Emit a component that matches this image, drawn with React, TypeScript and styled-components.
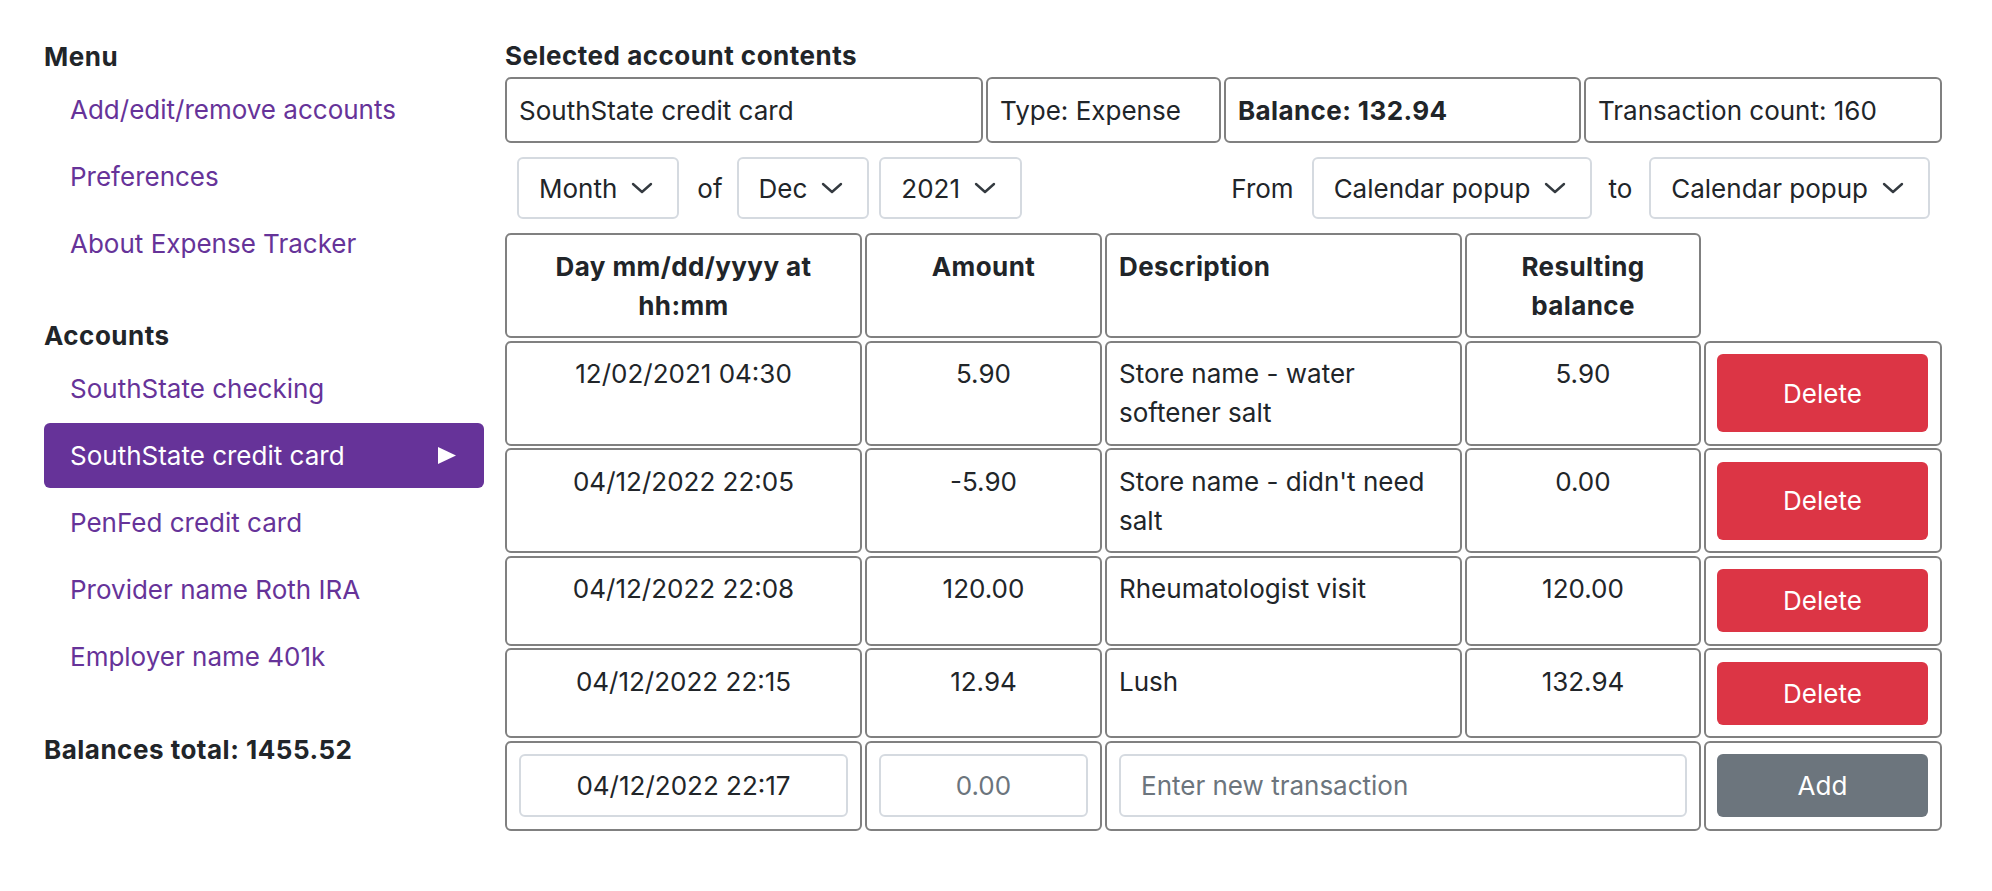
import React from "react";
import styled, { createGlobalStyle, css } from "styled-components";

const GlobalStyle = createGlobalStyle`
  html, body {
    margin: 0;
    padding: 0;
    background: #ffffff;
  }
  body {
    font-family: Inter, "Noto Sans", "Liberation Sans", sans-serif;
    font-size: 26px;
    line-height: 39px;
    color: #212529;
  }
  * { box-sizing: border-box; }
`;

const PURPLE = "#663399";
const CELL_BORDER = "#808080";
const INPUT_BORDER = "#d5dae0";
const BOLD_SPACING = "0.5px";

const Page = styled.div`
  display: flex;
  align-items: flex-start;
  padding: 36px 0 0 44px;
`;

const Sidebar = styled.aside`
  width: 440px;
  display: flex;
  flex-direction: column;
  padding-top: 1px;
`;

const SectionTitle = styled.div<{ $gap?: number }>`
  font-weight: 700;
  letter-spacing: ${BOLD_SPACING};
  line-height: 39px;
  margin-top: ${(p) => p.$gap ?? 0}px;
`;

const NavList = styled.nav`
  display: flex;
  flex-direction: column;
  gap: 2px;
  padding-top: 1px;
`;

const NavLink = styled.a<{ $active?: boolean }>`
  display: flex;
  align-items: center;
  justify-content: space-between;
  height: 65px;
  padding: 0 28px 0 26px;
  border-radius: 6px;
  color: ${PURPLE};
  text-decoration: none;
  cursor: pointer;
  ${(p) =>
    p.$active &&
    css`
      background: ${PURPLE};
      color: #ffffff;
    `}
`;

const Main = styled.main`
  width: 1438px;
  margin-left: 21px;
  display: flex;
  flex-direction: column;
`;

const MainTitle = styled.div`
  font-weight: 700;
  letter-spacing: ${BOLD_SPACING};
  line-height: 39px;
  margin-bottom: 2px;
`;

const InfoRow = styled.div`
  display: grid;
  grid-template-columns: 478px 235px 357px 358px;
  column-gap: 3px;
`;

const Cell = styled.div<{ $align?: "left" | "center"; $bold?: boolean }>`
  border: 2px solid ${CELL_BORDER};
  border-radius: 6px;
  padding: 11.5px 12px;
  line-height: 39px;
  text-align: ${(p) => p.$align ?? "left"};
  font-weight: ${(p) => (p.$bold ? 700 : 400)};
  letter-spacing: ${(p) => (p.$bold ? "0.4px" : "normal")};
`;

const ActionCell = styled(Cell)`
  display: flex;
  flex-direction: column;
  padding: 11.5px 12px 11.5px 11px;
`;

const FilterRow = styled.div`
  display: flex;
  justify-content: space-between;
  align-items: center;
  margin-top: 14px;
  padding: 0 13px 0 12px;
`;

const FilterGroup = styled.div`
  display: flex;
  align-items: center;
`;

const FilterLabel = styled.span<{ $l: number; $r: number }>`
  margin: 0 ${(p) => p.$r}px 0 ${(p) => p.$l}px;
`;

const SelectBox = styled.div<{ $ml?: number }>`
  display: inline-flex;
  align-items: center;
  gap: 14px;
  height: 62px;
  padding: 0 24px 0 20px;
  border: 2px solid ${INPUT_BORDER};
  border-radius: 6px;
  margin-left: ${(p) => p.$ml ?? 0}px;
  color: #212529;
  background: #ffffff;
`;

const TxGrid = styled.div`
  display: grid;
  grid-template-columns: 357px 237px 357px 236px 238px;
  column-gap: 3px;
  row-gap: 2.5px;
  margin-top: 14px;
`;

const HeadSpacer = styled.div``;

const DescCell = styled(Cell)<{ $span?: number }>`
  grid-column: span ${(p) => p.$span ?? 1};
`;

const Button = styled.button<{ $variant: "danger" | "secondary" }>`
  flex: 1;
  min-height: 63px;
  border: none;
  border-radius: 6px;
  font: inherit;
  color: #ffffff;
  background: ${(p) => (p.$variant === "danger" ? "#dc3545" : "#6c757d")};
  cursor: pointer;
`;

const TextInput = styled.input<{ $center?: boolean }>`
  display: block;
  width: 100%;
  height: 63px;
  border: 2px solid ${INPUT_BORDER};
  border-radius: 6px;
  padding: 0 20px;
  font: inherit;
  color: #212529;
  text-align: ${(p) => (p.$center ? "center" : "left")};
  outline: none;
  &::placeholder {
    color: #6c757d;
    opacity: 1;
  }
`;

const Chevron = () => (
  <svg width="22" height="12" viewBox="0 0 22 12" fill="none">
    <path
      d="M2 2 L11 10 L20 2"
      stroke="#343a40"
      strokeWidth="2.4"
      strokeLinecap="round"
      strokeLinejoin="round"
    />
  </svg>
);

const Triangle = () => (
  <svg width="18" height="17" viewBox="0 0 18 17">
    <polygon points="0,0 18,8.5 0,17" fill="#ffffff" />
  </svg>
);

const Select = ({ label, ml }: { label: string; ml?: number }) => (
  <SelectBox $ml={ml}>
    <span>{label}</span>
    <Chevron />
  </SelectBox>
);

type Tx = { date: string; amount: string; desc: React.ReactNode; balance: string };

const transactions: Tx[] = [
  {
    date: "12/02/2021 04:30",
    amount: "5.90",
    desc: (
      <>
        Store name - water
        <br />
        softener salt
      </>
    ),
    balance: "5.90",
  },
  {
    date: "04/12/2022 22:05",
    amount: "-5.90",
    desc: (
      <>
        Store name - didn't need
        <br />
        salt
      </>
    ),
    balance: "0.00",
  },
  { date: "04/12/2022 22:08", amount: "120.00", desc: "Rheumatologist visit", balance: "120.00" },
  { date: "04/12/2022 22:15", amount: "12.94", desc: "Lush", balance: "132.94" },
];

const menuLinks = ["Add/edit/remove accounts", "Preferences", "About Expense Tracker"];
const accounts = [
  "SouthState checking",
  "SouthState credit card",
  "PenFed credit card",
  "Provider name Roth IRA",
  "Employer name 401k",
];

export default function App() {
  return (
    <>
      <GlobalStyle />
      <Page>
        <Sidebar>
          <SectionTitle>Menu</SectionTitle>
          <NavList>
            {menuLinks.map((l) => (
              <NavLink key={l}>{l}</NavLink>
            ))}
          </NavList>
          <SectionTitle $gap={40}>Accounts</SectionTitle>
          <NavList>
            {accounts.map((a) => (
              <NavLink key={a} $active={a === "SouthState credit card"}>
                <span>{a}</span>
                {a === "SouthState credit card" && <Triangle />}
              </NavLink>
            ))}
          </NavList>
          <SectionTitle $gap={41}>Balances total: 1455.52</SectionTitle>
        </Sidebar>

        <Main>
          <MainTitle>Selected account contents</MainTitle>
          <InfoRow>
            <Cell>SouthState credit card</Cell>
            <Cell>Type: Expense</Cell>
            <Cell $bold>Balance: 132.94</Cell>
            <Cell>Transaction count: 160</Cell>
          </InfoRow>

          <FilterRow>
            <FilterGroup>
              <Select label="Month" />
              <FilterLabel $l={18} $r={14}>of</FilterLabel>
              <Select label="Dec" />
              <Select label="2021" ml={10} />
            </FilterGroup>
            <FilterGroup>
              <FilterLabel $l={0} $r={18}>From</FilterLabel>
              <Select label="Calendar popup" />
              <FilterLabel $l={16} $r={17}>to</FilterLabel>
              <Select label="Calendar popup" />
            </FilterGroup>
          </FilterRow>

          <TxGrid>
            <Cell $align="center" $bold>
              Day mm/dd/yyyy at
              <br />
              hh:mm
            </Cell>
            <Cell $align="center" $bold>Amount</Cell>
            <Cell $bold>Description</Cell>
            <Cell $align="center" $bold>
              Resulting
              <br />
              balance
            </Cell>
            <HeadSpacer />

            {transactions.map((t) => (
              <React.Fragment key={t.date}>
                <Cell $align="center">{t.date}</Cell>
                <Cell $align="center">{t.amount}</Cell>
                <Cell>{t.desc}</Cell>
                <Cell $align="center">{t.balance}</Cell>
                <ActionCell>
                  <Button $variant="danger">Delete</Button>
                </ActionCell>
              </React.Fragment>
            ))}

            <Cell>
              <TextInput $center defaultValue="04/12/2022 22:17" />
            </Cell>
            <Cell>
              <TextInput $center placeholder="0.00" />
            </Cell>
            <DescCell $span={2}>
              <TextInput placeholder="Enter new transaction" />
            </DescCell>
            <ActionCell>
              <Button $variant="secondary">Add</Button>
            </ActionCell>
          </TxGrid>
        </Main>
      </Page>
    </>
  );
}
